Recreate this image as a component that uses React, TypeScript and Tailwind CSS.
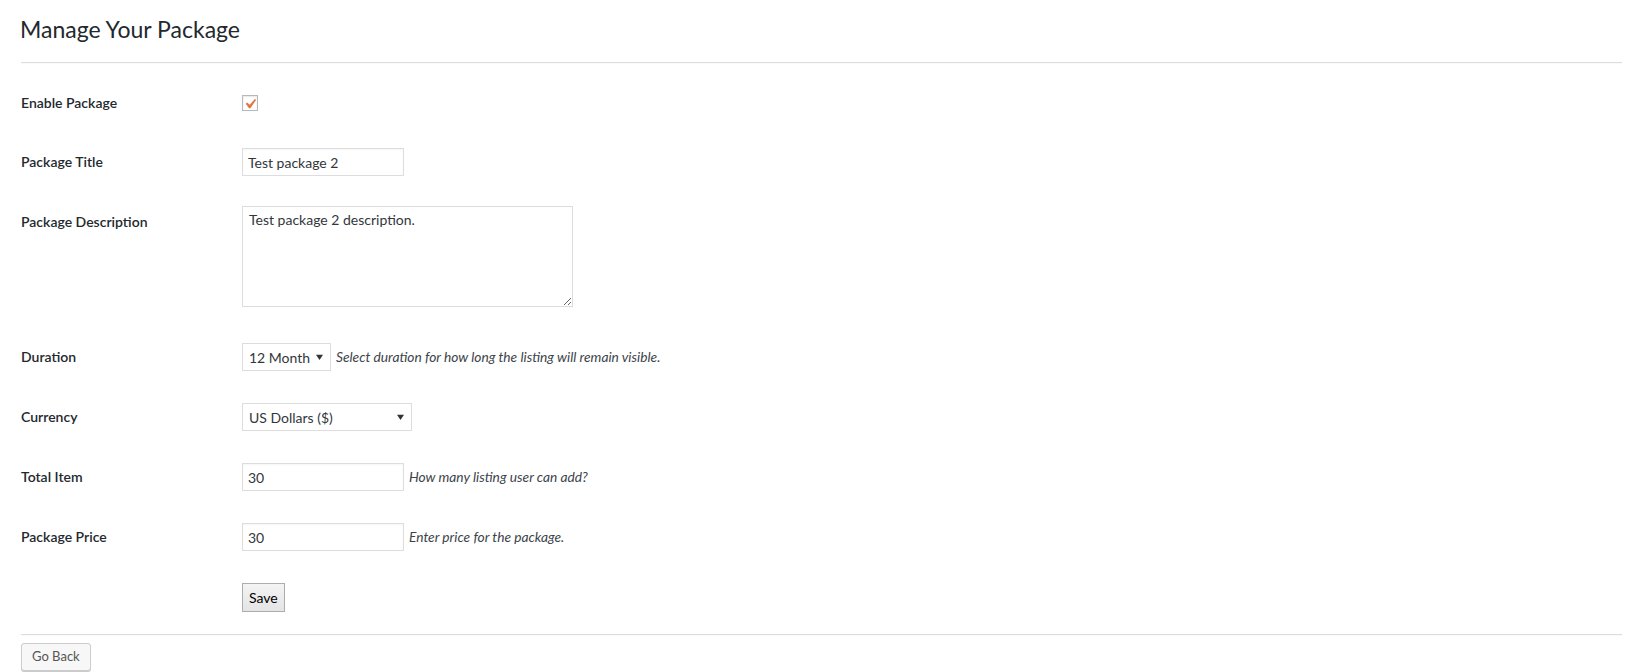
import { useState } from 'react'

const font = "font-['Lato','Noto_Sans','Liberation_Sans',sans-serif]"

function Caret() {
  return (
    <svg viewBox="0 0 8 8" className="pointer-events-none absolute top-1/2 right-[8px] h-[7px] w-[7px] -translate-y-1/2" fill="#333">
      <path d="M0 1.5h8L4 7.5z" />
    </svg>
  )
}

function Row({
  label,
  children,
  className = 'py-4 items-center',
  labelClass = '',
}: {
  label: string
  children: React.ReactNode
  className?: string
  labelClass?: string
}) {
  return (
    <div className={`flex ${className}`}>
      <div className={`w-[222px] shrink-0 pl-px text-[14px] leading-5 font-semibold text-[#23282d] ${labelClass}`}>{label}</div>
      <div className="flex items-center">{children}</div>
    </div>
  )
}

export default function App() {
  const [enabled, setEnabled] = useState(true)
  const [title, setTitle] = useState('Test package 2')
  const [desc, setDesc] = useState('Test package 2 description.')
  const [duration, setDuration] = useState('12')
  const [currency, setCurrency] = useState('USD')
  const [total, setTotal] = useState('30')
  const [price, setPrice] = useState('30')

  const inputCls =
    'h-[28px] border border-[#dddddd] bg-white px-[5px] text-[14px] text-[#32373c] outline-none shadow-[inset_0_1px_2px_rgba(0,0,0,0.04)]'
  const selectCls =
    'h-[28px] appearance-none border border-[#dddddd] bg-white pl-[6px] text-[14px] text-[#32373c] outline-none'
  const hintCls = 'ml-[5px] text-[13.75px] italic text-[#3c434a]'

  return (
    <div className={`min-h-screen bg-white pl-5 pr-[15px] ${font}`}>
      {/* Heading */}
      <h1 className="pt-[15px] pb-[18px] text-[23px] leading-[29px] font-normal text-[#23282d]">Manage Your Package</h1>
      <hr className="mb-4 ml-px border-t border-b border-t-[#dddddd] border-b-[#fafafa]" />

      <div>
        <Row label="Enable Package" className="items-center pt-[13px] pb-[19px]">
          <button
            onClick={() => setEnabled(!enabled)}
            className="flex h-4 w-4 items-center justify-center border border-[#b4b9be] bg-white shadow-[inset_0_1px_2px_rgba(0,0,0,0.1)]"
          >
            {enabled && (
              <svg viewBox="4 3 13 13" className="h-[13px] w-[13px]" fill="#e1773f">
                <path d="M14.83 4.89l1.34.94-5.81 8.38H9.02L5.78 9.67l1.34-1.25 2.57 2.4z" />
              </svg>
            )}
          </button>
        </Row>

        <Row label="Package Title">
          <input value={title} onChange={(e) => setTitle(e.target.value)} className={`${inputCls} w-[162px]`} />
        </Row>

        <Row label="Package Description" className="items-start pt-[14px] pb-[20px]" labelClass="mt-[6px]">
          <textarea
            value={desc}
            onChange={(e) => setDesc(e.target.value)}
            className="h-[101px] w-[331px] border border-[#dddddd] bg-white px-[6px] py-[3px] text-[14px] leading-[20px] text-[#32373c] outline-none"
          />
        </Row>

        <Row label="Duration">
          <div className="relative">
            <select value={duration} onChange={(e) => setDuration(e.target.value)} className={`${selectCls} w-[89px]`}>
              <option value="1">1 Month</option>
              <option value="6">6 Month</option>
              <option value="12">12 Month</option>
            </select>
            <Caret />
          </div>
          <span className={hintCls}>Select duration for how long the listing will remain visible.</span>
        </Row>

        <Row label="Currency">
          <div className="relative">
            <select value={currency} onChange={(e) => setCurrency(e.target.value)} className={`${selectCls} w-[170px]`}>
              <option value="USD">US Dollars ($)</option>
              <option value="EUR">Euros (€)</option>
              <option value="GBP">Pounds Sterling (£)</option>
            </select>
            <Caret />
          </div>
        </Row>

        <Row label="Total Item">
          <input value={total} onChange={(e) => setTotal(e.target.value)} className={`${inputCls} w-[162px]`} />
          <span className={hintCls}>How many listing user can add?</span>
        </Row>

        <Row label="Package Price">
          <input value={price} onChange={(e) => setPrice(e.target.value)} className={`${inputCls} w-[162px]`} />
          <span className={hintCls}>Enter price for the package.</span>
        </Row>

        <div className="flex pt-4 pb-[22px]">
          <div className="w-[222px] shrink-0" />
          <button className="h-[29px] border border-[#adadad] bg-gradient-to-b from-[#f4f4f4] to-[#e4e4e4] px-[6px] text-[14px] text-black">
            Save
          </button>
        </div>
      </div>

      <hr className="ml-px border-t border-b border-t-[#dddddd] border-b-[#fafafa]" />
      <div className="ml-px pt-[7px]">
        <button className="h-[28px] rounded-[3px] border border-[#cccccc] bg-[#f7f7f7] px-[10px] text-[13px] text-[#555555] shadow-[0_1px_0_#cccccc]">
          Go Back
        </button>
      </div>
    </div>
  )
}
